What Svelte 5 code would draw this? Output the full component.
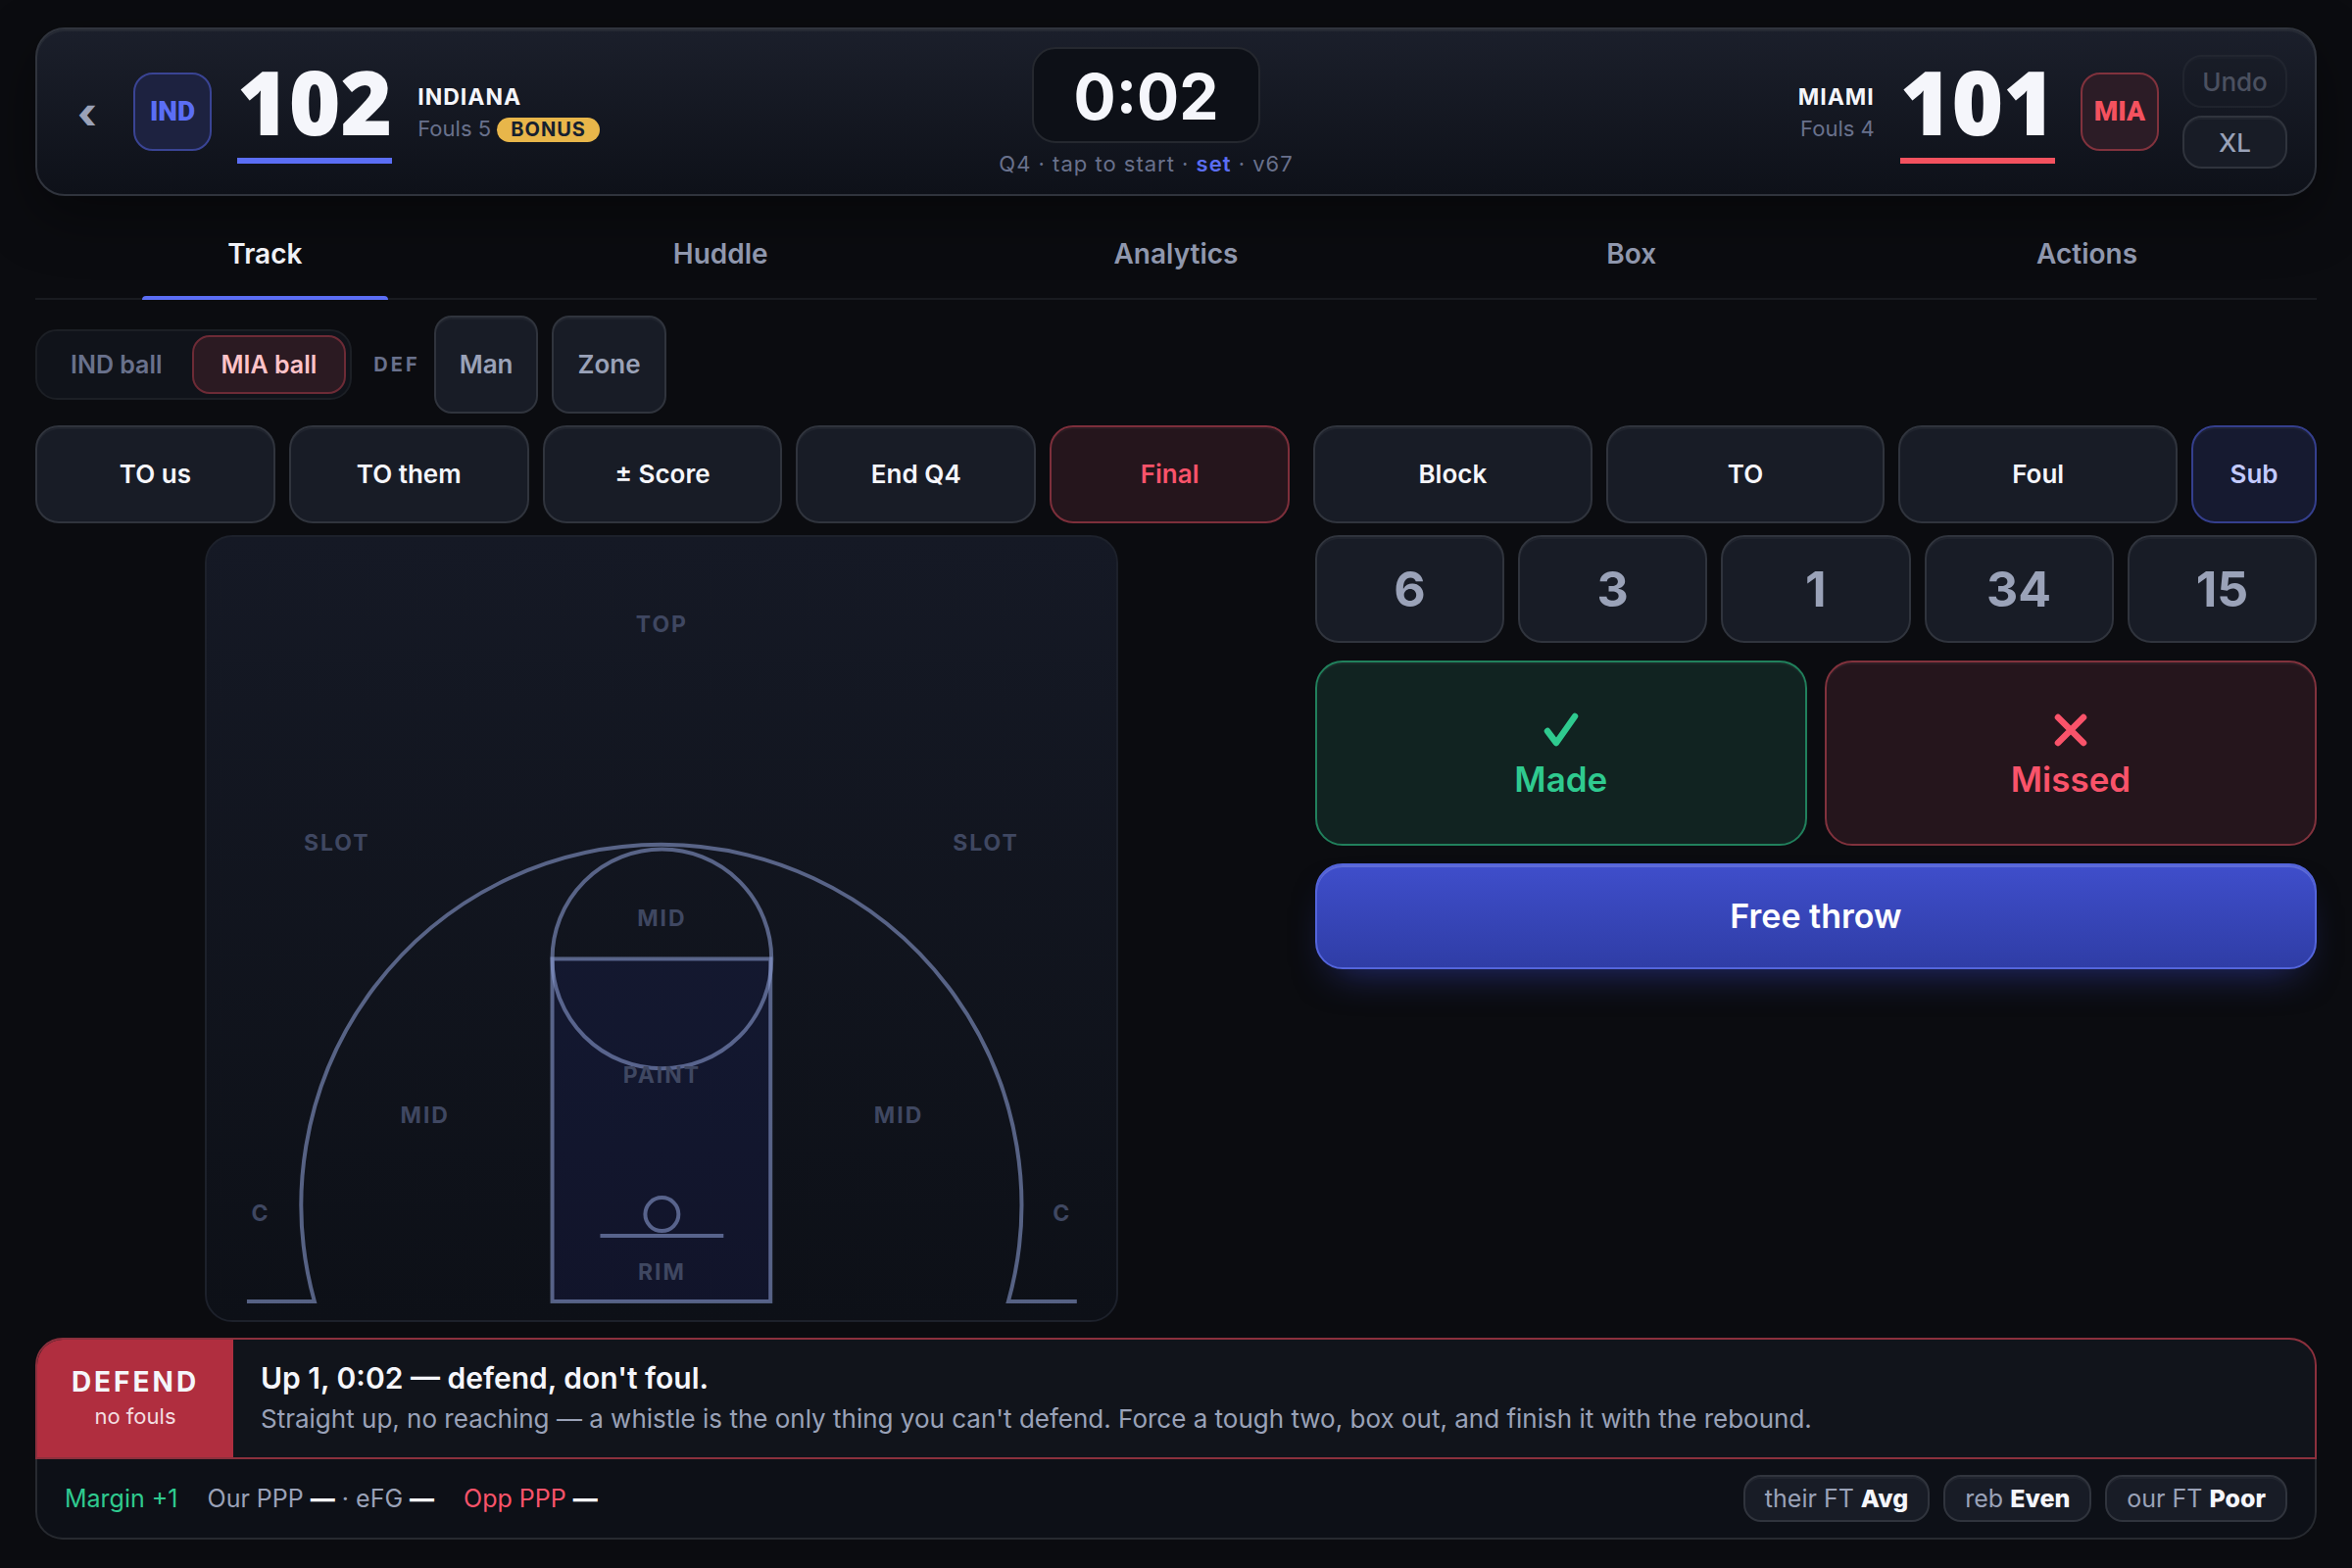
<script>
	let tabs = ['Track', 'Huddle', 'Analytics', 'Box', 'Actions'];
	let activeTab = 'Track';
	let ball = 'MIA';

	let gameActions = ['TO us', 'TO them', '± Score', 'End Q4', 'Final'];
	let playActions = ['Block', 'TO', 'Foul', 'Sub'];
	let lineup = [6, 3, 1, 34, 15];

	// label centres on the 930 x 800 court
	let zones = [
		{ name: 'TOP', x: 465, y: 97 },
		{ name: 'SLOT', x: 133, y: 320 },
		{ name: 'SLOT', x: 796, y: 320 },
		{ name: 'MID', x: 465, y: 398 },
		{ name: 'PAINT', x: 465, y: 558 },
		{ name: 'MID', x: 223, y: 599 },
		{ name: 'MID', x: 707, y: 599 },
		{ name: 'C', x: 55, y: 699 },
		{ name: 'C', x: 874, y: 699 },
		{ name: 'RIM', x: 465, y: 759 }
	];

	let dials = [
		{ label: 'their FT', value: 'Avg' },
		{ label: 'reb', value: 'Even' },
		{ label: 'our FT', value: 'Poor' }
	];
</script>

<div class="page">
	<header>
		<button class="back" aria-label="Back">‹</button>

		<div class="team">
			<span class="badge us">IND</span>
			<span class="score us">102</span>
			<div class="info">
				<div class="name">INDIANA</div>
				<div class="fouls">Fouls 5 <span class="bonus">BONUS</span></div>
			</div>
		</div>

		<div class="clock">
			<button class="time">0:02</button>
			<div class="period">Q4 · tap to start · <a href="#set">set</a> · v67</div>
		</div>

		<div class="team away">
			<div class="info">
				<div class="name">MIAMI</div>
				<div class="fouls">Fouls 4</div>
			</div>
			<span class="score them">101</span>
			<span class="badge them">MIA</span>
		</div>

		<div class="utils">
			<button disabled>Undo</button>
			<button>XL</button>
		</div>
	</header>

	<nav>
		{#each tabs as tab}
			<button class:active={tab === activeTab} on:click={() => (activeTab = tab)}>{tab}</button>
		{/each}
	</nav>

	<div class="possession">
		<div class="segment">
			<button class:on={ball === 'IND'} on:click={() => (ball = 'IND')}>IND ball</button>
			<button class:on={ball === 'MIA'} on:click={() => (ball = 'MIA')}>MIA ball</button>
		</div>
		<span class="def">DEF</span>
		<div class="schemes">
			<button class="key">Man</button>
			<button class="key">Zone</button>
		</div>
	</div>

	<div class="actions">
		<div class="group">
			{#each gameActions as action}
				<button class="key" class:final={action === 'Final'}>{action}</button>
			{/each}
		</div>
		<div class="group">
			{#each playActions as action}
				<button class="key" class:sub={action === 'Sub'}>{action}</button>
			{/each}
		</div>
	</div>

	<main>
		<div class="court">
			<svg viewBox="0 0 930 800" role="img" aria-label="Shot chart">
				<g class="lines">
					<path d="M41 781H110A368 368 0 1 1 819 781H889" />
					<rect class="lane" x="353" y="431" width="223" height="350" />
					<circle cx="465" cy="431" r="112" />
					<circle cx="465" cy="692" r="17" />
					<path d="M402 714H528" />
				</g>
				{#each zones as zone}
					<text x={zone.x} y={zone.y}>{zone.name}</text>
				{/each}
			</svg>
		</div>

		<div class="pad">
			<div class="players">
				{#each lineup as number}
					<button class="key">{number}</button>
				{/each}
			</div>
			<div class="results">
				<button class="made">
					<svg viewBox="0 0 36 36"><path d="M4 19L13 31L32 4" /></svg>
					Made
				</button>
				<button class="missed">
					<svg viewBox="0 0 36 36"><path d="M5 5L31 31M31 5L5 31" /></svg>
					Missed
				</button>
			</div>
			<button class="free">Free throw</button>
		</div>
	</main>

	<footer>
		<div class="advice">
			<div class="call">
				<strong>DEFEND</strong>
				<span>no fouls</span>
			</div>
			<div class="text">
				<h2>Up 1, 0:02 — defend, don't foul.</h2>
				<p>Straight up, no reaching — a whistle is the only thing you can't defend. Force a tough two, box out, and finish it with the rebound.</p>
			</div>
		</div>
		<div class="stats">
			<span class="margin">Margin +1</span>
			<span>Our PPP <b>—</b> · eFG <b>—</b></span>
			<span class="opp"><em>Opp PPP</em> <b>—</b></span>
			<div class="dials">
				{#each dials as dial}
					<button>{dial.label} <b>{dial.value}</b></button>
				{/each}
			</div>
		</div>
	</footer>
</div>

<style>
	:global(body) {
		background: #0b0c10;
	}

	.page {
		box-sizing: border-box;
		min-height: 100vh;
		padding: 28px 36px;
		color: #f5f6fb;
		font-family: Inter, 'Liberation Sans', sans-serif;
		font-size: 26px;
		line-height: 32px;
	}

	button {
		box-sizing: border-box;
		margin: 0;
		padding: 0;
		border: none;
		background: none;
		color: inherit;
		font: inherit;
		cursor: pointer;
	}

	header {
		display: flex;
		align-items: center;
		gap: 24px;
		box-sizing: border-box;
		height: 172px;
		padding: 0 28px;
		border: 2px solid #30343d;
		border-radius: 30px;
		background: linear-gradient(#1b1f2b, #0e1119);
		box-shadow: inset 0 2px #262a34, 0 20px 60px rgba(0, 0, 0, 0.4);
	}

	.back {
		width: 46px;
		padding-top: 2px;
		color: #9aa2b8;
		font-size: 44px;
		font-weight: 800;
		line-height: 44px;
	}

	.team {
		display: flex;
		flex: 1;
		align-items: center;
		gap: 26px;
	}

	.away {
		justify-content: flex-end;
		text-align: right;
	}

	.badge {
		display: grid;
		place-items: center;
		box-sizing: border-box;
		width: 80px;
		height: 80px;
		border: 2px solid;
		border-radius: 20px;
		font-family: Roboto, sans-serif;
		font-size: 28px;
		font-weight: 900;
	}

	.badge.us {
		border-color: #3a4494;
		background: #1d2240;
		color: #5b6ef5;
	}

	.badge.them {
		border-color: #81323d;
		background: #2c1c26;
		color: #f4525f;
	}

	.score {
		padding-bottom: 16px;
		border-bottom: 6px solid;
		font-family: 'Noto Sans', sans-serif;
		font-size: 90px;
		font-weight: 900;
		line-height: 84px;
	}

	.score.us {
		border-color: #5b6ef5;
	}

	.score.them {
		border-color: #f4525f;
	}

	.info {
		padding-top: 2px;
	}

	.name {
		font-size: 23px;
		font-weight: 700;
		letter-spacing: 1px;
	}

	.fouls {
		color: #69718c;
		font-size: 22px;
	}

	.bonus {
		display: inline-block;
		padding: 0 14px;
		border-radius: 13px;
		background: #e8b64a;
		color: #16202f;
		font-size: 20px;
		font-weight: 700;
		letter-spacing: 1px;
		line-height: 25px;
	}

	.clock {
		text-align: center;
	}

	.time {
		width: 233px;
		height: 98px;
		padding-top: 4px;
		border: 2px solid #25282f;
		border-radius: 24px;
		background: #0d1017;
		font-size: 64px;
		font-weight: 700;
	}

	.period {
		margin-top: 8px;
		color: #69718c;
		font-size: 22px;
		letter-spacing: 1px;
		line-height: 26px;
	}

	.period a {
		color: #5b6ef5;
		font-weight: 600;
		text-decoration: none;
	}

	.utils {
		display: grid;
		gap: 8px;
	}

	.utils button {
		width: 107px;
		height: 54px;
		padding-top: 2px;
		border: 2px solid #30343d;
		border-radius: 20px;
		background: #181c26;
		box-shadow: inset 0 2px #20242e;
		color: #9aa2b8;
		font-weight: 500;
	}

	.utils button:disabled {
		opacity: 0.4;
	}

	nav {
		display: flex;
		margin-top: 16px;
		padding: 0 2px;
		border-bottom: 2px solid #191b20;
	}

	nav button {
		position: relative;
		flex: 1;
		height: 88px;
		padding-bottom: 2px;
		color: #8f97ad;
		font-size: 28px;
		font-weight: 600;
	}

	nav .active {
		color: #f0f1f5;
	}

	nav .active::after {
		content: '';
		position: absolute;
		right: 23%;
		bottom: -2px;
		left: 23%;
		height: 4px;
		border-radius: 4px 4px 0 0;
		background: #5b6ef5;
	}

	.key {
		border: 2px solid #30343d;
		border-radius: 24px;
		background: #181c26;
		box-shadow: inset 0 2px #20242e;
		font-weight: 600;
	}

	.possession {
		display: flex;
		align-items: center;
		margin: 16px 0 12px;
	}

	.segment {
		display: flex;
		box-sizing: border-box;
		height: 72px;
		padding: 4px;
		border: 2px solid #1c1f25;
		border-radius: 22px;
		background: #10131a;
	}

	.segment button {
		padding: 0 28px;
		border: 2px solid transparent;
		border-radius: 18px;
		color: #69718c;
		font-size: 25px;
		font-weight: 600;
	}

	.segment .on {
		border-color: #6d2b36;
		background: #2b1a22;
		color: #ffc3c9;
	}

	.def {
		margin: 0 14px 0 22px;
		color: #69718c;
		font-size: 20px;
		font-weight: 700;
		letter-spacing: 3px;
	}

	.schemes {
		display: flex;
		gap: 14px;
	}

	.schemes .key {
		height: 100px;
		padding: 0 24px;
		border-radius: 18px;
		color: #9aa2b8;
	}

	.actions {
		display: grid;
		grid-template-columns: 5fr 4fr;
		gap: 24px;
		margin-bottom: 12px;
	}

	.group {
		display: flex;
		gap: 14px;
	}

	.group .key {
		flex: 1;
		height: 100px;
	}

	.group .final {
		border-color: #7d2f3b;
		background: #25151c;
		box-shadow: inset 0 2px #2c1c23;
		color: #f9536a;
	}

	.group .sub {
		flex: 0 0 128px;
		border-color: #353f8d;
		background: #161a30;
		box-shadow: inset 0 2px #1e2237;
		color: #c3caff;
	}

	main {
		display: grid;
		grid-template-columns: 5fr 4fr;
		align-items: start;
		gap: 28px;
	}

	.court {
		box-sizing: border-box;
		justify-self: center;
		width: 73%;
		border: 2px solid #1d212b;
		border-radius: 28px;
		background: linear-gradient(#151925, #0d1017);
	}

	.court svg {
		display: block;
		width: 100%;
	}

	.lines {
		fill: none;
		stroke: rgba(139, 156, 211, 0.58);
		stroke-width: 4;
	}

	.lines .lane {
		fill: rgba(40, 50, 160, 0.14);
	}

	.court text {
		fill: #3f4761;
		font-size: 23px;
		font-weight: 700;
		letter-spacing: 2px;
		text-anchor: middle;
	}

	.pad {
		display: grid;
		gap: 18px;
	}

	.players {
		display: flex;
		gap: 14px;
	}

	.players .key {
		flex: 1;
		height: 110px;
		color: #9aa2b8;
		font-size: 50px;
		font-weight: 700;
	}

	.results {
		display: flex;
		gap: 18px;
	}

	.results button {
		display: flex;
		flex: 1;
		flex-direction: column;
		align-items: center;
		justify-content: center;
		gap: 12px;
		height: 189px;
		padding-top: 4px;
		border: 2px solid;
		border-radius: 28px;
		font-size: 35px;
		font-weight: 600;
		line-height: 40px;
	}

	.results svg {
		width: 36px;
		height: 36px;
		fill: none;
		stroke: currentColor;
		stroke-width: 6.5;
		stroke-linecap: round;
		stroke-linejoin: round;
	}

	.results .made {
		border-color: #21805c;
		background: #112321;
		box-shadow: inset 0 2px #1a2b29;
		color: #2fca8f;
	}

	.results .missed {
		border-color: #81323d;
		background: #25151c;
		box-shadow: inset 0 2px #2e1e25;
		color: #f9536a;
	}

	.free {
		height: 108px;
		border: 2px solid #5465dc;
		border-radius: 28px;
		background: linear-gradient(#3f4ecb, #2f3da6);
		box-shadow: inset 0 2px #5f6cd6, 0 20px 40px -20px rgba(70, 85, 240, 0.5);
		color: #fff;
		font-size: 34px;
		font-weight: 600;
	}

	footer {
		margin-top: 16px;
	}

	.advice {
		display: flex;
		box-sizing: border-box;
		height: 124px;
		overflow: hidden;
		border: 2px solid #8b303d;
		border-radius: 28px 28px 0 0;
		background: #11141b;
	}

	.call {
		display: flex;
		flex-direction: column;
		justify-content: center;
		box-sizing: border-box;
		width: 200px;
		padding-bottom: 2px;
		background: #b02e3f;
		text-align: center;
	}

	.call strong {
		font-size: 28px;
		font-weight: 700;
		letter-spacing: 3px;
		line-height: 38px;
	}

	.call span {
		color: #f3dde0;
		font-size: 22px;
	}

	.text {
		display: flex;
		flex-direction: column;
		justify-content: center;
		padding: 0 28px;
	}

	h2 {
		margin: 0;
		font-size: 30px;
		font-weight: 600;
		line-height: 42px;
	}

	p {
		margin: 0;
		color: #9aa2b8;
		line-height: 42px;
	}

	.stats {
		display: flex;
		align-items: center;
		gap: 30px;
		box-sizing: border-box;
		height: 82px;
		padding: 0 28px;
		border: 2px solid #272a30;
		border-top: none;
		border-radius: 0 0 28px 28px;
		background: #0d1017;
		color: #9aa2b8;
		font-size: 25px;
	}

	.stats b {
		color: #f5f6fb;
		font-weight: 800;
	}

	.margin {
		color: #2fca8f;
	}

	.opp em {
		color: #f9536a;
		font-style: normal;
	}

	.dials {
		display: flex;
		gap: 14px;
		margin-left: auto;
	}

	.dials button {
		height: 48px;
		padding: 0 20px;
		border: 2px solid #30343d;
		border-radius: 18px;
		background: #181c26;
		box-shadow: inset 0 2px #20242e;
	}
</style>
